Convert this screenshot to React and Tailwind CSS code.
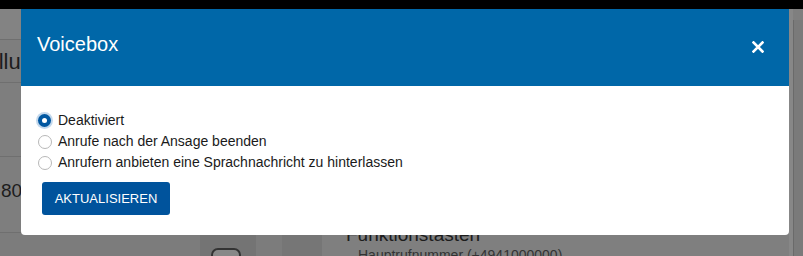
import React, { useState } from 'react';

const options = [
  { value: 'off', label: 'Deaktiviert' },
  { value: 'hangup', label: 'Anrufe nach der Ansage beenden' },
  { value: 'message', label: 'Anrufern anbieten eine Sprachnachricht zu hinterlassen' },
];

function Radio({ checked }) {
  if (checked) {
    return (
      <span className="flex h-[17px] w-[17px] items-center justify-center rounded-full bg-[#c3d8ec]">
        <span className="flex h-[13px] w-[13px] items-center justify-center rounded-full bg-[#0057a1]">
          <span className="h-[5px] w-[5px] rounded-full bg-white" />
        </span>
      </span>
    );
  }
  return (
    <span className="flex h-[17px] w-[17px] items-center justify-center">
      <span className="h-[14px] w-[14px] rounded-full border border-[#b8b8b8] bg-white" />
    </span>
  );
}

function VoiceboxModal() {
  const [mode, setMode] = useState('off');
  return (
    <div className="absolute left-[21px] top-0 flex h-[226px] w-[768px] flex-col overflow-hidden rounded-b-[4px] bg-white">
      {/* Kopfzeile */}
      <div className="flex h-[77px] items-center justify-between bg-[#0067a8] pl-[16px] pr-[24px] text-white">
        <h2 className="text-[20px] leading-none pb-[7px]">Voicebox</h2>
        <button className="mt-[-2px] flex h-[14px] w-[14px] items-center justify-center">
          <svg width="12" height="12" viewBox="0 0 12 12">
            <path d="M1.5 1.5 L10.5 10.5 M10.5 1.5 L1.5 10.5" stroke="white" strokeWidth="2.6" strokeLinecap="square" />
          </svg>
        </button>
      </div>

      {/* Inhalt */}
      <div className="flex flex-col pl-[15px] pt-[24px]">
        {options.map(o => (
          <label key={o.value} className="flex h-[21px] cursor-pointer items-center gap-[4px] text-[14px] text-[#1a1a1a]" onClick={() => setMode(o.value)}>
            <Radio checked={mode === o.value} />
            <span className="ml-[1px]">{o.label}</span>
          </label>
        ))}
        <button className="ml-[6px] mt-[9px] h-[33px] w-[128px] rounded-[3px] bg-[#00539c] text-[13px] text-white">
          AKTUALISIEREN
        </button>
      </div>
    </div>
  );
}

export default function App() {
  return (
    <div className="h-[256px] w-[803px] overflow-hidden bg-[#7f7f7f] font-['Liberation_Sans',Arial,sans-serif]">
      <div className="h-[9px] bg-black" />
      <div className="relative flex h-[247px]">
        {/* abgedunkelte Seite im Hintergrund */}
        <div className="flex w-[200px] flex-col bg-[#7e7e7e]">
          <div className="h-[31px] border-b border-[#6f6f6f] bg-[#838383]" />
          <div className="flex h-[43px] items-center overflow-hidden border-b border-[#6f6f6f] whitespace-nowrap">
            <span className="ml-[-27px] text-[22px] text-[#1c1c1c]">Vollumleitung</span>
          </div>
          <div className="h-[74px] border-b border-[#6f6f6f]" />
          <div className="flex h-[76px] items-center overflow-hidden border-b border-[#6f6f6f] pb-[6px] whitespace-nowrap">
            <span className="ml-[1px] text-[19px] text-[#1c1c1c]">80</span>
          </div>
          <div className="flex-1 bg-[#7c7c7c]" />
        </div>
        <div className="flex w-[56px] flex-col justify-end bg-[#747474]">
          <div className="mb-[-6px] ml-[11px] h-[14px] w-[30px] rounded-full border-[2px] border-[#333] bg-[#888]" />
        </div>
        <div className="w-[26px] bg-[#7c7c7c]" />
        <div className="w-[40px] bg-[#767676]" />
        <div className="flex flex-1 flex-col justify-end bg-[#7f7f7f] pl-[24px]">
          <div className="text-[19px] leading-none text-[#1c1c1c]">Funktionstasten</div>
          <div className="mb-[-6px] mt-[4px] pl-[12px] text-[14px] leading-none text-[#333]">Hauptrufnummer (+4941000000)</div>
        </div>
        <div className="flex w-[14px]">
          <div className="w-[4px] bg-[#878787]" />
          <div className="mt-[11px] flex-1 border-l border-[#6a6a6a] bg-[#7a7a7a]" />
        </div>

        <VoiceboxModal />
      </div>
    </div>
  );
}
